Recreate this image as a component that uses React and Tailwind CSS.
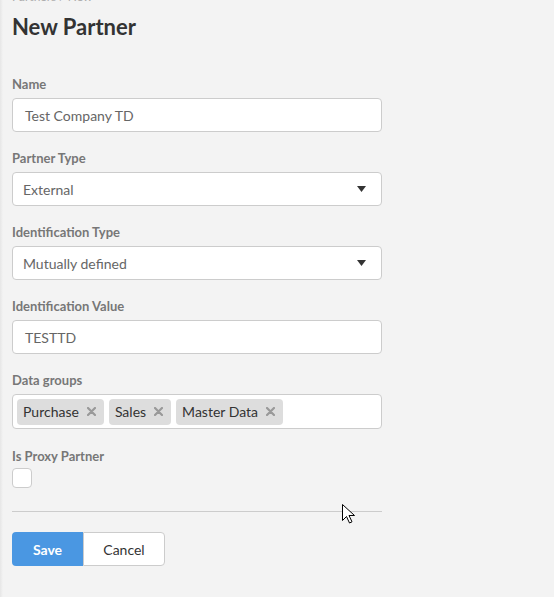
import React from "react";

function Label({ children }) {
  return <div className="h-5 text-[13px] font-bold leading-[13px] text-[#777]">{children}</div>;
}

function TextInput({ value }) {
  return (
    <div className="flex h-[34px] items-center rounded border border-[#ccc] bg-white px-3 text-[14px] text-[#666]">
      {value}
    </div>
  );
}

function Select({ value }) {
  return (
    <div className="flex h-[34px] items-center justify-between rounded border border-[#ccc] bg-white pl-2.5 pr-[15px] text-[14px] text-[#666]">
      <span>{value}</span>
      <svg width="9" height="6" viewBox="0 0 9 6">
        <path d="M0 0h9L4.5 6z" fill="#333" />
      </svg>
    </div>
  );
}

function Tag({ label }) {
  return (
    <div className="flex h-[26px] items-center gap-2 rounded-sm bg-[#ddd] pl-1.5 pr-2 text-[14px] text-[#333]">
      <span>{label}</span>
      <svg width="9" height="9" viewBox="0 0 9 9">
        <path d="M1 1l7 7M8 1L1 8" stroke="#999" strokeWidth="2.2" strokeLinecap="round" />
      </svg>
    </div>
  );
}

export default function App() {
  return (
    <div
      className="relative min-h-[597px] bg-[#f3f3f3] px-3 text-[#333]"
      style={{ fontFamily: "Lato, 'Open Sans', sans-serif" }}
    >
      <div className="absolute left-0 top-0 h-full w-[3px] bg-gradient-to-r from-[#e6e6e6] to-[#f3f3f3]" />
      <div className="h-1 overflow-hidden">
        <div className="-mt-[10px] text-[12px] leading-[14px] text-[#aaa]">Partners / New</div>
      </div>
      <h1 className="mt-[8px] text-[22px] font-bold leading-[30px] text-[#333]">New Partner</h1>

      <div className="mt-[36px] flex w-[370px] flex-col">
        <Label>Name</Label>
        <TextInput value="Test Company TD" />

        <div className="mt-5">
          <Label>Partner Type</Label>
          <Select value="External" />
        </div>

        <div className="mt-5">
          <Label>Identification Type</Label>
          <Select value="Mutually defined" />
        </div>

        <div className="mt-5">
          <Label>Identification Value</Label>
          <TextInput value="TESTTD" />
        </div>

        <div className="mt-5">
          <Label>Data groups</Label>
          <div className="flex h-[35px] items-center gap-[5px] rounded border border-[#ccc] bg-white px-1">
            <Tag label="Purchase" />
            <Tag label="Sales" />
            <Tag label="Master Data" />
          </div>
        </div>

        <div className="mt-[21px]">
          <div className="h-[17px] text-[13px] font-bold leading-[13px] text-[#777]">Is Proxy Partner</div>
          <div className="mt-[1px] h-5 w-5 rounded border border-[#ccc] bg-white" />
        </div>

        <div className="mt-[23px] h-px bg-[#ccc]" />

        <div className="mt-5 flex">
          <button className="h-[34px] w-[71px] rounded-l bg-[#4a97e2] text-[14px] font-bold text-white">
            Save
          </button>
          <button className="h-[34px] w-[82px] rounded-r border border-[#ccc] bg-white text-[14px] text-[#333]">
            Cancel
          </button>
        </div>
      </div>

      <svg className="absolute left-[342px] top-[504px]" width="13" height="20" viewBox="0 0 13 20">
        <path d="M0.5 0.5v16l4-4 3 6.5 2.5-1.2-3-6.3h5.5z" fill="#fff" stroke="#000" strokeWidth="1" />
      </svg>
    </div>
  );
}
